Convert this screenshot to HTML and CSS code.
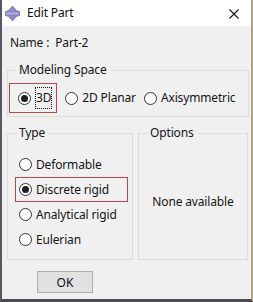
FILE: index.html
```html
<!DOCTYPE html>
<html lang="en">
<head>
  <meta charset="UTF-8">
  <title>Edit Part</title>
  <link rel="stylesheet" href="styles.css">
</head>
<body>

  <div class="window">
    <div class="titlebar">
      <svg class="app-icon" width="15" height="15" viewBox="0 0 15 15">
        <polygon points="7.5,0 11.5,4.5 15,5.8 15,9.2 11.5,10.5 7.5,15 3.5,10.5 0,9.2 0,5.8 3.5,4.5" fill="#8b86c8" stroke="#6b66a8" stroke-width="0.6"/>
        <rect x="1" y="6.6" width="13" height="1.8" fill="#b4b0e0"/>
      </svg>
      <span class="title">Edit Part</span>
      <svg class="close" width="10" height="10" viewBox="0 0 10 10">
        <path d="M0.5 0.5 L9.5 9.5 M9.5 0.5 L0.5 9.5" stroke="#111" stroke-width="1.1"/>
      </svg>
    </div>

    <div class="content">
      <div class="name">Name :&nbsp; Part-2</div>

      <fieldset class="group space">
        <legend>Modeling Space</legend>
        <div class="space-row">
          <label class="radio marked">
            <span class="dot checked"></span>
            <span class="focus">3D</span>
          </label>
          <label class="radio">
            <span class="dot"></span>
            <span>2D Planar</span>
          </label>
          <label class="radio">
            <span class="dot"></span>
            <span>Axisymmetric</span>
          </label>
        </div>
      </fieldset>

      <div class="columns">
        <fieldset class="group type">
          <legend>Type</legend>
          <label class="radio row">
            <span class="dot"></span>
            <span>Deformable</span>
          </label>
          <label class="radio row marked">
            <span class="dot checked"></span>
            <span>Discrete rigid</span>
          </label>
          <label class="radio row">
            <span class="dot"></span>
            <span>Analytical rigid</span>
          </label>
          <label class="radio row">
            <span class="dot"></span>
            <span>Eulerian</span>
          </label>
        </fieldset>

        <fieldset class="group options">
          <legend>Options</legend>
          <div class="none">None available</div>
        </fieldset>
      </div>

      <div class="actions">
        <button class="ok">OK</button>
      </div>
    </div>
  </div>

</body>
</html>
```

FILE: styles.css
```css
* {
  margin: 0;
  padding: 0;
  box-sizing: border-box;
}

body {
  font-family: "Noto Sans", "Open Sans", sans-serif;
  font-size: 12px;
  line-height: 16px;
  letter-spacing: -0.15px;
  color: #161616;
  background: #4e4b55;
}

.window {
  width: 253px;
  height: 302px;
  background: #f0f0f0;
  border-left: 2px solid #5a5663;
  border-right: 2px solid #b5a47a;
  border-bottom: 3px solid #4e4b55;
  display: flex;
  flex-direction: column;
}

/* Title bar */
.titlebar {
  height: 26px;
  background: #fff;
  display: flex;
  align-items: center;
  padding: 0 12px 0 3px;
}

.app-icon {
  display: block;
  margin-top: 1px;
}

.title {
  margin-left: 7px;
  font-size: 12px;
  color: #111;
}

.close {
  display: block;
  margin-left: auto;
  margin-top: 2px;
}

/* Dialog body */
.content {
  padding: 0 2px 0 5px;
}

.name {
  margin-top: 9px;
  padding-left: 3px;
}

.group {
  border: 1px solid #dcdcdc;
  min-width: 0;
}

.group legend {
  padding: 0 3px;
  line-height: 16px;
}

.space {
  margin-top: 11px;
  padding: 5px 1px 3px 1px;
}

.space legend {
  margin-left: 7px;
}

.space-row {
  display: flex;
  align-items: center;
  gap: 3px;
}

.space-row .radio + .radio {
  margin-left: 5px;
}

.radio {
  display: flex;
  align-items: center;
  gap: 4px;
  white-space: nowrap;
}

.dot {
  width: 13px;
  height: 13px;
  border: 1px solid #333;
  border-radius: 50%;
  background: #fff;
  display: flex;
  align-items: center;
  justify-content: center;
  flex-shrink: 0;
}

.dot.checked::after {
  content: "";
  width: 7px;
  height: 7px;
  border-radius: 50%;
  background: #1f1f1f;
}

.marked {
  border: 1px solid #c0444e;
}

.space .marked {
  height: 30px;
  padding: 0 4px 0 8px;
}

.focus {
  border: 1px dotted #111;
  padding: 2px 0;
}

/* Type / Options */
.columns {
  display: flex;
  gap: 5px;
  margin-top: 8px;
}

.type {
  width: 126px;
  padding: 11px 4px 7px 7px;
}

.type legend,
.options legend {
  margin-left: 1px;
}

.row {
  height: 25px;
  border: 1px solid transparent;
  padding-left: 3px;
}

.row.marked {
  border-color: #c0444e;
}

.options {
  width: 110px;
  padding: 11px 4px 7px 7px;
  display: flex;
  align-items: center;
  justify-content: center;
}

.none {
  margin-left: -3px;
}

/* Buttons */
.actions {
  margin-top: 11px;
  padding-left: 30px;
}

.ok {
  width: 56px;
  height: 22px;
  background: #e1e1e1;
  border: 1px solid #adadad;
  font-family: inherit;
  font-size: 12px;
  color: #111;
}
```
